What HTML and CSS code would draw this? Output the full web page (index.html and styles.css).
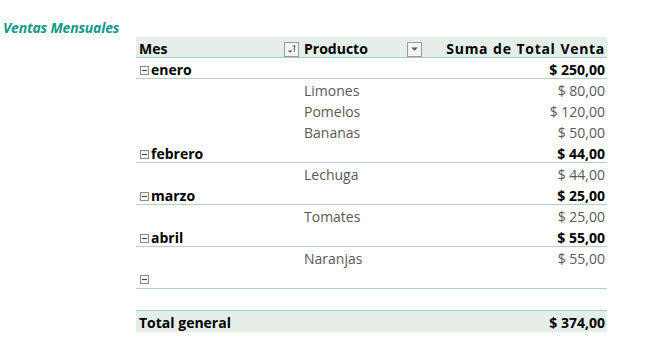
FILE: index.html
```html
<!DOCTYPE html>
<html lang="es">
<head>
<meta charset="utf-8">
<link rel="stylesheet" href="styles.css">
</head>
<body>
<div class="title">Ventas Mensuales</div>
<div class="pivot">
  <div class="row head">
    <div class="c1"><span>Mes</span>
      <span class="btn"><svg width="14" height="14" viewBox="0 0 14 14"><path d="M3 8.5h5l-2.5 2.5z" fill="#555"/><path d="M10 3v7M8.8 4.4L10 3l1.2 1.4" stroke="#555" stroke-width="1" fill="none"/></svg></span>
    </div>
    <div class="c2"><span>Producto</span>
      <span class="btn"><svg width="14" height="14" viewBox="0 0 14 14"><path d="M3.5 5.5h7l-3.5 3.5z" fill="#555"/></svg></span>
    </div>
    <div class="c3"><span class="wide">Suma de Total Venta</span></div>
  </div>

  <div class="row month"><div class="c1"><span class="mini"></span>enero</div><div class="c2"></div><div class="c3">$ 250,00</div></div>
  <div class="row item"><div class="c1"></div><div class="c2">Limones</div><div class="c3">$ 80,00</div></div>
  <div class="row item"><div class="c1"></div><div class="c2">Pomelos</div><div class="c3">$ 120,00</div></div>
  <div class="row item"><div class="c1"></div><div class="c2">Bananas</div><div class="c3">$ 50,00</div></div>

  <div class="row month"><div class="c1"><span class="mini"></span>febrero</div><div class="c2"></div><div class="c3">$ 44,00</div></div>
  <div class="row item"><div class="c1"></div><div class="c2">Lechuga</div><div class="c3">$ 44,00</div></div>

  <div class="row month"><div class="c1"><span class="mini"></span>marzo</div><div class="c2"></div><div class="c3">$ 25,00</div></div>
  <div class="row item"><div class="c1"></div><div class="c2">Tomates</div><div class="c3">$ 25,00</div></div>

  <div class="row month"><div class="c1"><span class="mini"></span>abril</div><div class="c2"></div><div class="c3">$ 55,00</div></div>
  <div class="row item"><div class="c1"></div><div class="c2">Naranjas</div><div class="c3">$ 55,00</div></div>

  <div class="row month blank"><div class="c1"><span class="mini"></span></div><div class="c2"></div><div class="c3"></div></div>
  <div class="row spacer"></div>
  <div class="row total"><div class="c1">Total general</div><div class="c2"></div><div class="c3">$ 374,00</div></div>
</div>
</body>
</html>
```

FILE: styles.css
```css
*, *::before, *::after { box-sizing: border-box; }
html, body {
  margin: 0;
  padding: 0;
  background: #ffffff;
}
body {
  font-family: "Open Sans", "Lato", sans-serif;
  font-size: 14px;
  color: #000;
}
.title {
  padding: 0 0 0 3px;
  margin-top: 18px;
  height: 19px;
  font-weight: bold;
  font-style: italic;
  color: #139a8c;
  font-size: 14px;
  line-height: 20px;
  letter-spacing: -0.2px;
}
.pivot {
  margin-left: 136px;
  width: 471px;
}
.row {
  display: grid;
  grid-template-columns: 166px 123px 182px;
  height: 21px;
  line-height: 20px;
}
.row > div {
  display: flex;
  align-items: center;
  white-space: nowrap;
  padding-top: 2px;
}
.head {
  background: #e3efe8;
  border-bottom: 1px solid #aacbbf;
  font-weight: bold;
}
.head .c1, .head .c2 {
  justify-content: space-between;
  padding-left: 3px;
  padding-right: 3px;
}
.head .c2 { padding-left: 2px; }
.head .c3 { justify-content: flex-end; padding-right: 2px; }
.wide { letter-spacing: 0.7px; word-spacing: 0.5px; }
.btn {
  width: 15px;
  height: 15px;
  border: 1px solid #9a9a9a;
  background: #f5f5f5;
  display: flex;
  align-items: center;
  justify-content: center;
}
.btn svg { display: block; }
.month {
  font-weight: bold;
  border-bottom: 1px solid #b8cfc8;
}
.month .c1 { padding-left: 4px; }
.month .c3, .item .c3, .total .c3 {
  justify-content: flex-end;
  padding-right: 2px;
}
.item { color: #595959; }
.item .c2 { padding-left: 2px; }
.mini {
  width: 9px;
  height: 9px;
  border: 1px solid #8a8a8a;
  background: #f4f4f4;
  margin-right: 2px;
  position: relative;
  display: inline-block;
}
.mini::after {
  content: "";
  position: absolute;
  left: 1px;
  right: 1px;
  top: 3px;
  height: 1px;
  background: #444;
}
.total {
  background: #e3efe8;
  border-top: 1px solid #aacbbf;
  font-weight: bold;
  height: 22px;
}
.total .c1 { padding-left: 3px; }
```
